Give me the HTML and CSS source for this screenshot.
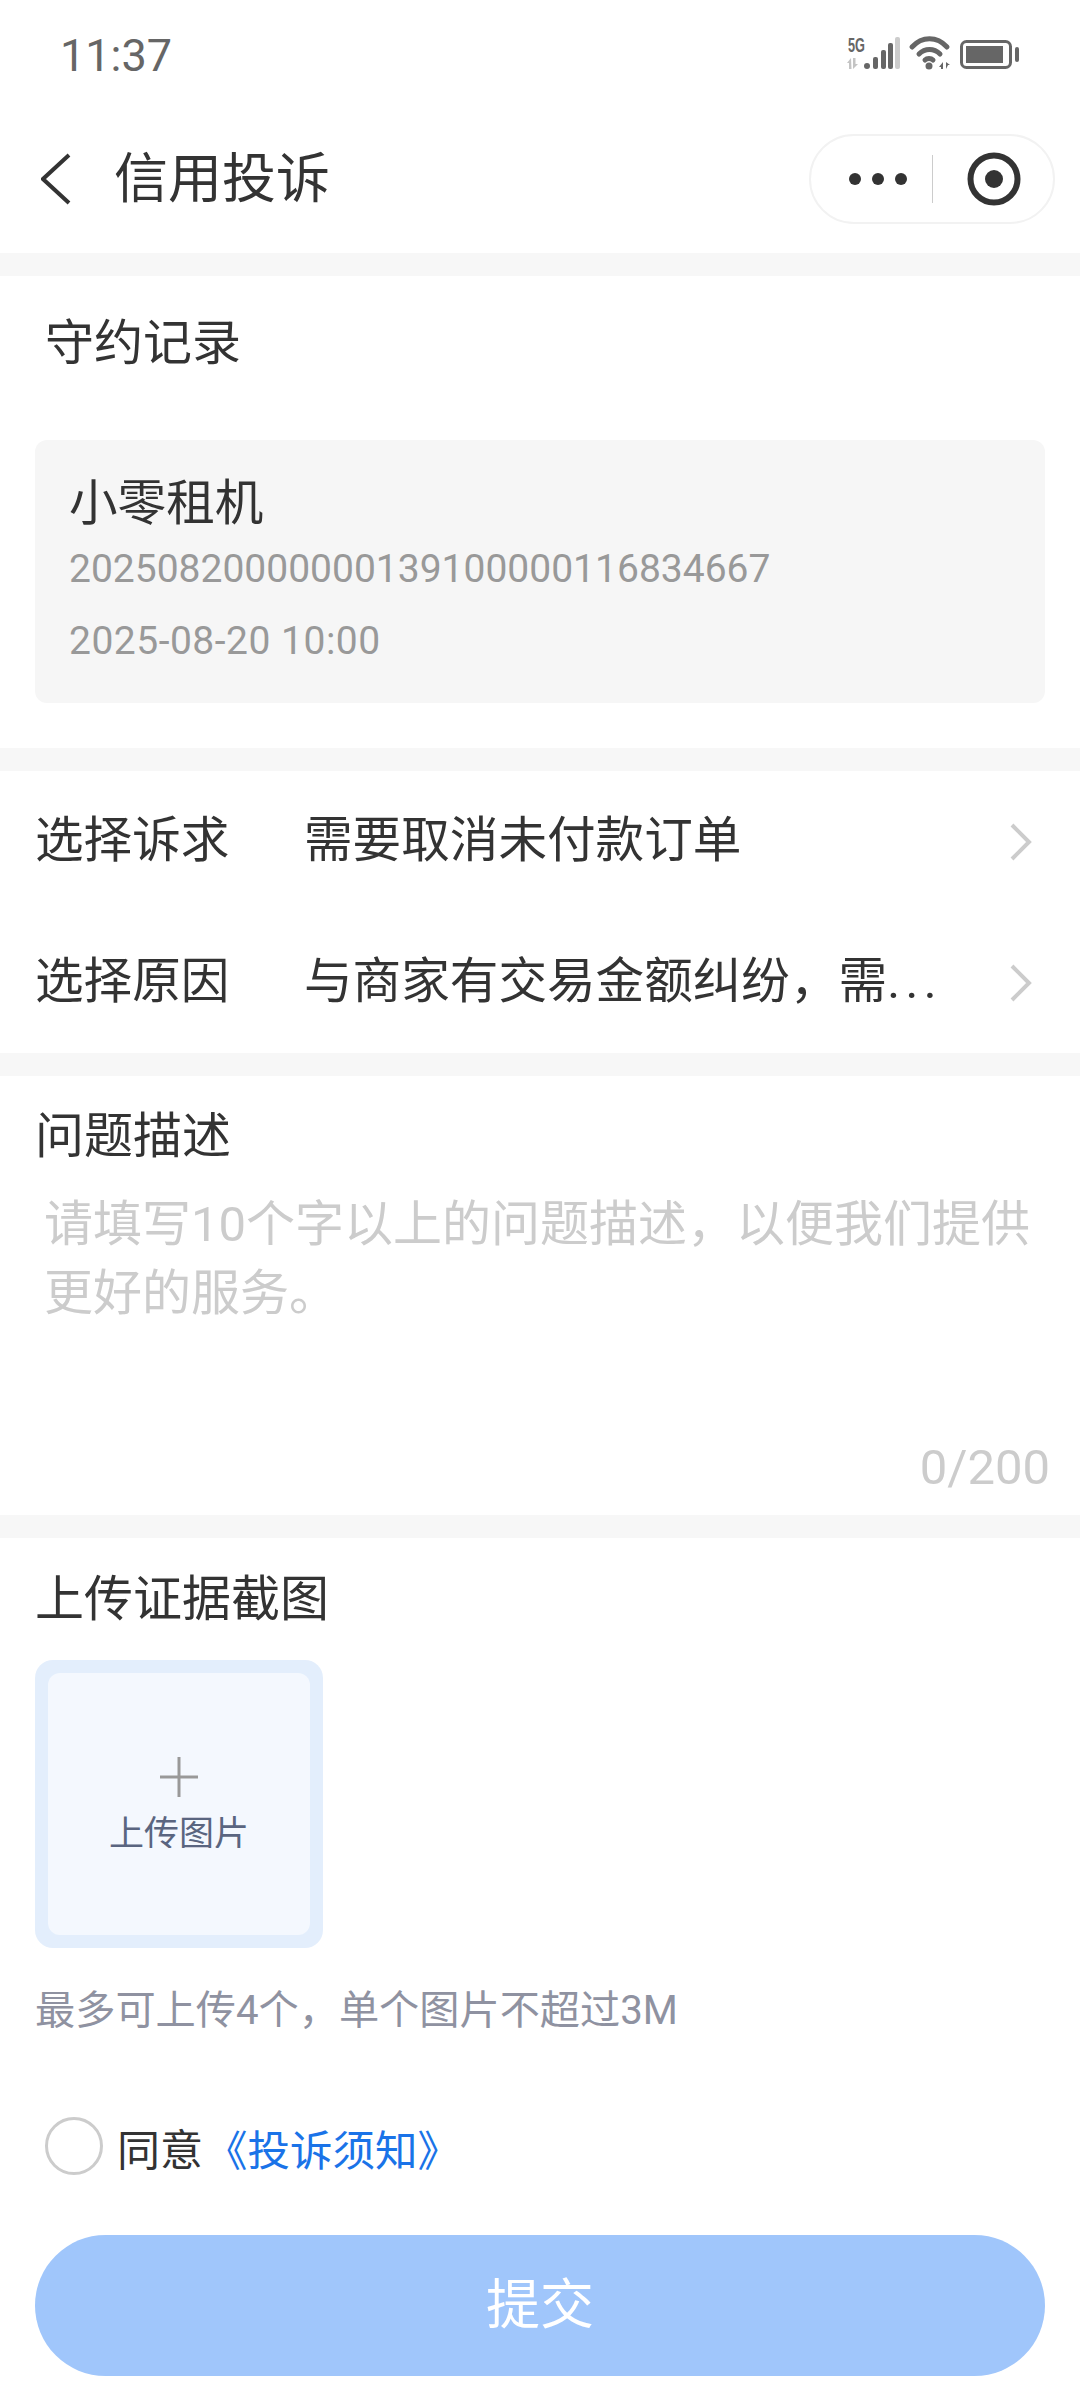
FILE: index.html
```html
<!DOCTYPE html>
<html lang="zh-CN">

<head>
    <meta charset="UTF-8">
    <meta name="viewport" content="width=device-width, initial-scale=1.0">
    <title>信用投诉</title>
    <link rel="stylesheet" href="styles.css">
</head>

<body>
    <div class="page">
        <!-- 状态栏 -->
        <div class="status-bar">
            <span class="time">11:37</span>
            <svg class="status-icons" width="180" height="46" viewBox="845 30 180 46">
                <text class="net-text" x="848" y="52" textLength="17" lengthAdjust="spacingAndGlyphs">5G</text>
                <path d="M851 58l-4 5h2v6h2.500zM853 58v11l5-5h-2.500v-6z" fill="#c4c4c4" />
                <circle cx="867" cy="66" r="3" fill="#666" />
                <rect x="873" y="57" width="5" height="12" rx="2" fill="#666" />
                <rect x="881" y="50" width="5" height="19" rx="2" fill="#666" />
                <rect x="888" y="43" width="5" height="26" rx="2" fill="#666" />
                <rect x="895" y="37" width="5" height="32" rx="2" fill="#ccc" />
                <path d="M912 47c10-11 25-11 35 0" class="wifi" />
                <path d="M919 54c6-6 15-6 21 0" class="wifi" />
                <path d="M925 60c2-2 6-2 8 0" class="wifi" />
                <circle cx="929" cy="66" r="3.500" fill="#666" />
                <path d="M943 62l-4 5h2v2h2zM946 69V62l4 3h-2z" fill="#666" />
                <rect x="961.500" y="41.500" width="49" height="26" rx="5" class="bat" />
                <rect x="966" y="46" width="37" height="17" fill="#666" />
                <rect x="1015" y="47" width="4" height="15" rx="2" fill="#666" />
            </svg>
        </div>

        <!-- 导航 -->
        <div class="nav">
            <svg class="back" width="30" height="52" viewBox="0 0 30 52">
                <polyline points="28,2 2,26 28,50" />
            </svg>
            <span class="nav-title">信用投诉</span>
            <div class="capsule">
                <div class="dots"><i></i><i></i><i></i></div>
                <div class="capsule-line"></div>
                <svg width="54" height="54" viewBox="0 0 54 54">
                    <circle cx="27" cy="27" r="23.500" class="ring" />
                    <circle cx="27" cy="27" r="9" fill="#333" />
                </svg>
            </div>
        </div>

        <div class="gap"></div>

        <!-- 守约记录 -->
        <div class="section record">
            <div class="record-title">守约记录</div>
            <div class="record-card">
                <div class="card-name">小零租机</div>
                <div class="card-no">20250820000000139100000116834667</div>
                <div class="card-date">2025-08-20 10:00</div>
            </div>
        </div>

        <div class="gap"></div>

        <!-- 诉求 -->
        <div class="section">
            <div class="row">
                <span class="row-label">选择诉求</span>
                <span class="row-value">需要取消未付款订单</span>
                <svg class="arrow" width="24" height="40" viewBox="0 0 24 40">
                    <polyline points="3,3 20,20 3,37" />
                </svg>
            </div>
            <div class="row">
                <span class="row-label">选择原因</span>
                <span class="row-value">与商家有交易金额纠纷，需<em class="more">...</em></span>
                <svg class="arrow" width="24" height="40" viewBox="0 0 24 40">
                    <polyline points="3,3 20,20 3,37" />
                </svg>
            </div>
        </div>

        <div class="gap"></div>

        <!-- 问题描述 -->
        <div class="section desc">
            <div class="label">问题描述</div>
            <div class="placeholder">请填写10个字以上的问题描述，以便我们提供更好的服务。</div>
            <div class="count">0/200</div>
        </div>

        <div class="gap"></div>

        <!-- 上传 -->
        <div class="section upload">
            <div class="label">上传证据截图</div>
            <div class="upload-box">
                <div class="upload-inner">
                    <svg width="38" height="40" viewBox="0 0 38 40">
                        <path d="M0 20h38M19 0v40" />
                    </svg>
                    <div class="upload-text">上传图片</div>
                </div>
            </div>
            <div class="upload-tip">最多可上传4个，单个图片不超过3M</div>
            <div class="agree">
                <span class="radio"></span>
                <span class="agree-text">同意</span>
                <span class="agree-link">《投诉须知》</span>
            </div>
            <div class="submit">提交</div>
        </div>
    </div>
</body>

</html>
```

FILE: styles.css
```css
* {
    padding: 0;
    margin: 0;
    box-sizing: border-box;
}

body {
    background: #f5f5f5;
    font-family: Roboto, "Noto Sans CJK SC", sans-serif;
    color: #333;
}

.page {
    width: 1080px;
    height: 2388px;
    overflow: hidden;
}

.gap {
    height: 23px;
    background: #f7f7f7;
}

.section {
    background: #fff;
}

/* 状态栏 */
.status-bar {
    height: 105px;
    padding: 5px 62px 0 60px;
    background: #fff;
    display: flex;
    align-items: center;
    justify-content: space-between;
}

.time {
    font-size: 45px;
    color: #666;
}

.status-icons {
    margin-right: -7px;
    margin-top: -5px;
}

.net-text {
    font-family: "Liberation Sans", sans-serif;
    font-size: 20px;
    font-weight: bold;
    fill: #666;
}

.wifi {
    fill: none;
    stroke: #666;
    stroke-width: 5;
    stroke-linecap: round;
}

.bat {
    fill: none;
    stroke: #666;
    stroke-width: 3;
}

/* 导航 */
.nav {
    height: 148px;
    padding: 0 25px 0 41px;
    background: #fff;
    display: flex;
    align-items: center;
}

.back polyline {
    fill: none;
    stroke: #333;
    stroke-width: 4;
}

.nav-title {
    font-size: 54px;
    line-height: 70px;
    margin: 2px 0 0 43px;
    flex: 1;
}

.capsule {
    width: 246px;
    height: 90px;
    border: 2px solid #f2f2f2;
    border-radius: 45px;
    display: flex;
    align-items: center;
}

.dots {
    display: flex;
    gap: 11px;
    margin-left: 38px;
}

.dots i {
    width: 12px;
    height: 12px;
    border-radius: 50%;
    background: #333;
}

.capsule-line {
    width: 1px;
    height: 48px;
    background: #ccc;
    margin: 0 34px 0 25px;
}

.ring {
    fill: none;
    stroke: #333;
    stroke-width: 6;
}

/* 守约记录 */
.record {
    height: 472px;
    padding: 36px 35px 0;
}

.record-title {
    font-size: 49px;
    line-height: 64px;
    padding-left: 10px;
}

.record-card {
    height: 263px;
    margin-top: 64px;
    padding: 32px 34px 0;
    background: #f6f6f6;
    border-radius: 12px;
}

.card-name {
    font-size: 48.600px;
    line-height: 64px;
}

.card-no,
.card-date {
    font-size: 39px;
    line-height: 72px;
    color: #999;
}

.card-no {
    margin-top: -3px;
}

.card-date {
    letter-spacing: 0.500px;
}

/* 诉求 */
.row {
    height: 141px;
    padding: 0 47px 0 35px;
    display: flex;
    align-items: center;
    font-size: 48.600px;
}

.row-label {
    width: 269px;
    margin-bottom: 11px;
}

.row-value {
    flex: 1;
    white-space: nowrap;
    margin-bottom: 11px;
}

.more {
    font-style: normal;
    letter-spacing: 5.500px;
}

.arrow polyline {
    fill: none;
    stroke: #ccc;
    stroke-width: 4;
}

/* 问题描述 */
.desc {
    height: 439px;
    padding: 29px 30px 0 35px;
}

.label {
    font-size: 49px;
    line-height: 64px;
}

.placeholder {
    font-size: 49px;
    line-height: 69px;
    color: #ccc;
    margin-top: 21px;
    padding-left: 9px;
}

.count {
    font-size: 49px;
    line-height: 64px;
    color: #ccc;
    text-align: right;
    margin-top: 108px;
}

/* 上传 */
.upload {
    height: 851px;
    padding: 30px 35px 0;
}

.upload-box {
    width: 288px;
    height: 288px;
    margin-top: 28px;
    padding: 13px;
    background: #e3eefc;
    border-radius: 18px;
}

.upload-inner {
    height: 262px;
    padding-top: 84px;
    background: #f4f8fe;
    border-radius: 12px;
    display: flex;
    flex-direction: column;
    align-items: center;
}

.upload-inner svg {
    fill: none;
    stroke: #999;
    stroke-width: 3;
}

.upload-text {
    font-size: 35px;
    line-height: 46px;
    height: 36px;
    margin-top: 15px;
    overflow: hidden;
    color: #5a6580;
}

.upload-tip {
    font-size: 40.200px;
    line-height: 50px;
    color: #8f92a1;
    margin-top: 38px;
}

.agree {
    display: flex;
    align-items: center;
    height: 60px;
    margin-top: 80px;
    padding-left: 10px;
    font-size: 43px;
}

.agree-text,
.agree-link {
    margin-top: 2px;
}

.radio {
    width: 58px;
    height: 58px;
    border: 3px solid #ccc;
    border-radius: 50%;
    margin-right: 14px;
}

.agree-link {
    color: #1a73e8;
    font-size: 42.500px;
    margin-left: 2px;
}

.submit {
    height: 141px;
    margin-top: 59px;
    border-radius: 71px;
    background: #a0c6fb;
    color: #fff;
    font-size: 54px;
    line-height: 141px;
    text-align: center;
}
```
